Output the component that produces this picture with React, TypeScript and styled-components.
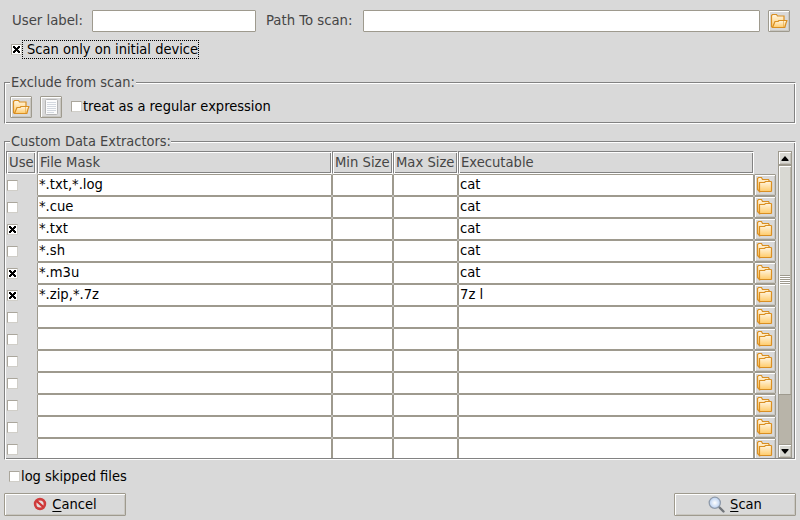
import React, { useState } from "react";
import styled, { createGlobalStyle, css } from "styled-components";

const Global = createGlobalStyle`
  * { box-sizing: border-box; }
  body { margin: 0; background: #d9d9d9; overflow: hidden; }
`;

const face = "#d9d9d9";
const edge = "#9e9a8e";
const groove = css`
  border: 1px solid;
  border-color: #828282 #fff #fff #828282;
  box-shadow: inset 1px 1px 0 #fff, inset -1px -1px 0 #828282;
`;

const Window = styled.main`
  width: 800px;
  height: 520px;
  display: flex;
  flex-direction: column;
  padding: 10px 4px 4px;
  background: ${face};
  color: #000;
  font: 14.53px/20px "DejaVu Sans Condensed", "DejaVu Sans", sans-serif;
  font-stretch: condensed;
  white-space: nowrap;
`;

const TopRow = styled.div`
  display: flex;
  height: 22px;
  padding: 0 6px 0 8px;
  color: #454545;
  font-size: 14.75px;
`;

const FieldLabel = styled.label<{ $width: number; $indent?: number }>`
  width: ${(p) => p.$width}px;
  padding-left: ${(p) => p.$indent ?? 0}px;
  flex: none;
`;

const TextField = styled.input<{ $width?: number }>`
  width: ${(p) => (p.$width ? `${p.$width}px` : "auto")};
  flex: ${(p) => (p.$width ? "none" : "1")};
  min-width: 0;
  height: 22px;
  border: 1px solid ${edge};
  border-radius: 1px;
  background: #fff;
  padding: 0 2px;
  margin: 0;
  font: inherit;
  outline: none;
`;

const IconButton = styled.button<{ $gap?: number }>`
  width: 22px;
  height: 22px;
  flex: none;
  margin: 0 0 0 ${(p) => p.$gap ?? 0}px;
  padding: 0;
  display: grid;
  place-items: center;
  background: ${face};
  border: 1px solid ${edge};
  border-radius: 1px;
  box-shadow: inset 1px 1px 0 #fff, inset -1px -1px 0 #c9c7c1;
`;

const CheckLine = styled.label<{ $top: number; $left: number }>`
  display: flex;
  align-items: center;
  height: 20px;
  margin: ${(p) => p.$top}px 0 0 ${(p) => p.$left}px;
`;

const CheckText = styled.span`
  padding-left: 1px;
`;

const Box = styled.span`
  display: block;
  width: 11px;
  height: 11px;
  flex: none;
  background: #fff;
  border: 1px solid;
  border-color: #aaa69c #d0cec8 #d0cec8 #aaa69c;
  svg { display: block; }
`;

const Focused = styled.span`
  width: 177px;
  height: 19px;
  line-height: 17px;
  padding-left: 4px;
  border: 1px dotted #000;
`;

const Group = styled.section<{ $top: number; $height: number }>`
  ${groove}
  height: ${(p) => p.$height}px;
  margin-top: ${(p) => p.$top}px;
  padding: 0 1px 1px;
  flex: none;
`;

const Legend = styled.h2<{ $width: number }>`
  width: ${(p) => p.$width}px;
  height: 16px;
  margin: -9px 0 0 4px;
  padding-left: 1px;
  line-height: 16px;
  font-size: 14.45px;
  font-weight: normal;
  color: #454545;
  background: ${face};
`;

const ExcludeTools = styled.div`
  display: flex;
  padding: 6px 0 0 4px;
  gap: 8px;
`;

const Extractors = styled.div`
  display: flex;
  margin-top: 2px;
  height: 307px;
`;

const Table = styled.div`
  width: 770px;
  height: 307px;
  overflow: hidden;
  flex: none;
  font-size: 14.65px;
`;

const columns = css`
  display: grid;
  grid-template-columns: 31px 295px 61px 65px 296px 22px;
`;

const Header = styled.div`
  ${columns}
  height: 23px;
  color: #454545;
`;

const HeadCell = styled.div<{ $narrow?: boolean }>`
  ${groove}
  padding-left: 2px;
  margin-right: ${(p) => (p.$narrow ? 1 : 0)}px;
  line-height: 20px;
`;

const Row = styled.div`
  ${columns}
  height: 22px;
`;

const CellInput = styled(TextField)`
  width: 100%;
  padding: 0 1px 3px;
`;

const UseCell = styled.label`
  display: block;
  padding: 6px 0 0 1px;
`;

const Scrollbar = styled.div`
  width: 14px;
  margin-left: 2px;
  height: 307px;
  display: flex;
  flex-direction: column;
  background: #b8b4a9;
  border-left: 1px solid ${edge};
  border-right: 1px solid ${edge};
`;

const Arrow = styled.button`
  height: 14px;
  width: 12px;
  padding: 0;
  display: grid;
  place-items: center;
  border: 0;
  border-top: 1px solid ${edge};
  border-bottom: 1px solid ${edge};
  background: #d9d9d3;
  box-shadow: inset 1px 1px 0 #fff, inset -1px -1px 0 #c4c1b9;
`;

const Thumb = styled.div`
  height: 230px;
  flex: none;
  display: grid;
  place-items: center;
  border-bottom: 1px solid ${edge};
  border-top: 1px solid ${edge};
  background: #d9d9d3;
  box-shadow: inset 1px 1px 0 #fff, inset -1px 0 0 #b9b5ab;
`;

const Grip = styled.div`
  width: 10px;
  height: 10px;
  background: repeating-linear-gradient(${edge} 0 1px, #fff 1px 2px);
`;

const Spacer = styled.div`
  flex: 1;
`;

const Footer = styled.footer`
  display: flex;
  justify-content: space-between;
  margin-top: 7px;
`;

const ActionButton = styled.button`
  width: 122px;
  height: 23px;
  display: flex;
  align-items: center;
  justify-content: center;
  gap: 5px;
  padding: 0 0 1px;
  border: 1px solid ${edge};
  border-radius: 1px;
  background: ${face};
  box-shadow: inset 1px 1px 0 #fff, inset -1px -1px 0 #c9c7c1;
  color: #000;
  font: inherit;
`;

const ActionText = styled.span`
  height: 20px;
  line-height: 20px;
`;

const Mnemonic = styled.span`
  text-decoration: underline;
  text-decoration-thickness: 1px;
  text-underline-offset: 2px;
`;

const Gradients = () => (
  <svg width="0" height="0" display="block">
    <defs>
      <linearGradient id="paper" x1="0" y1="0" x2="0" y2="1">
        <stop offset="0" stopColor="#fff6e2" />
        <stop offset="1" stopColor="#ffca68" />
      </linearGradient>
      <radialGradient id="lens">
        <stop offset="0" stopColor="#fff" />
        <stop offset="1" stopColor="#b8cff0" />
      </radialGradient>
    </defs>
  </svg>
);

const OpenFolder = () => (
  <svg width="18" height="18" viewBox="0 0 18 18">
    <path d="M2.500 15.500l-1-1v-11l1-1h4l1 1.500h6.500v5.500" fill="url(#paper)" stroke="#d98f22" strokeWidth="1.200" />
    <path d="M2.500 15.500l2.500-6h3l1-1h8l-1 2.500-1.200 4.500z" fill="url(#paper)" stroke="#d98f22" strokeWidth="1.200" strokeLinejoin="round" />
    <path d="M13.500 9v6" stroke="#e4a545" opacity=".6" />
  </svg>
);

const ClosedFolder = () => (
  <svg width="18" height="18" viewBox="0 0 18 18">
    <path d="M2.500 14.500l-1-1v-11l1-1h3l1 2h6l1 2v8z" fill="url(#paper)" stroke="#d98f22" strokeWidth="1.200" />
    <path d="M2.500 14.500l1 1V6.500h5l1-1h5.500l.500.500v9l-.500.500H3.500z" fill="url(#paper)" stroke="#d98f22" strokeWidth="1.200" />
  </svg>
);

const PageIcon = () => (
  <svg width="16" height="18" viewBox="0 0 16 18">
    <rect x="2.500" y="1.500" width="12" height="15" rx="1" fill="#fcfcfc" stroke="#b5b5b5" />
    <path d="M4 4.500h9M4 6.500h9M4 8.500h9M4 10.500h9M4 12.500h9M4 14.500h7" stroke="#d3d8df" />
  </svg>
);

const StopIcon = () => (
  <svg width="14" height="14" viewBox="0 0 14 14">
    <circle cx="7" cy="7" r="4.900" fill="#e6dcdc" stroke="#cf3c3c" strokeWidth="2.600" />
    <path d="M3.800 4.200l6.400 5.600" stroke="#cf3434" strokeWidth="2.200" />
  </svg>
);

const LensIcon = () => (
  <svg width="17" height="17" viewBox="0 0 17 17">
    <path d="M11 11l4.500 4.500" stroke="#71757a" strokeWidth="2.400" strokeLinecap="round" />
    <circle cx="6.800" cy="6.800" r="5.600" fill="url(#lens)" stroke="#8f9bab" strokeWidth="1.300" />
  </svg>
);

const CheckBox = ({ on: initial = false }: { on?: boolean }) => {
  const [on, setOn] = useState(initial);
  return (
    <Box role="checkbox" aria-checked={on} onClick={() => setOn(!on)}>
      {on && (
        <svg width="9" height="9" viewBox="0 0 9 9" shapeRendering="crispEdges">
          <path d="M1 1h2v1h1v1h1V2h1V1h2v2H7v1H6v1h1v1h1v2H6V7H5V6H4v1H3v1H1V6h1V5h1V4H2V3H1z" />
        </svg>
      )}
    </Box>
  );
};

const rows: { mask: string; exec: string; on?: boolean }[] = [
  { mask: "*.txt,*.log", exec: "cat" },
  { mask: "*.cue", exec: "cat" },
  { mask: "*.txt", exec: "cat", on: true },
  { mask: "*.sh", exec: "cat" },
  { mask: "*.m3u", exec: "cat", on: true },
  { mask: "*.zip,*.7z", exec: "7z l", on: true },
  ...Array.from({ length: 7 }, () => ({ mask: "", exec: "" })),
];

export default function App() {
  return (
    <Window>
      <Global />
      <TopRow>
        <FieldLabel $width={80}>User label:</FieldLabel>
        <TextField $width={164} />
        <FieldLabel $width={107} $indent={10}>Path To scan:</FieldLabel>
        <TextField />
        <IconButton $gap={8}><OpenFolder /></IconButton>
      </TopRow>
      <CheckLine $top={7} $left={7}>
        <CheckBox on />
        <Focused>Scan only on initial device</Focused>
      </CheckLine>
      <Group $top={23} $height={42}>
        <Legend $width={126}>Exclude from scan:</Legend>
        <ExcludeTools>
          <IconButton><OpenFolder /></IconButton>
          <IconButton><PageIcon /></IconButton>
          <CheckLine $top={0} $left={1}>
            <CheckBox />
            <CheckText>treat as a regular expression</CheckText>
          </CheckLine>
        </ExcludeTools>
      </Group>
      <Group $top={17} $height={319}>
        <Legend $width={161}>Custom Data Extractors:</Legend>
        <Extractors>
          <Table>
            <Header>
              <HeadCell $narrow>Use</HeadCell>
              <HeadCell>File Mask</HeadCell>
              <HeadCell>Min Size</HeadCell>
              <HeadCell>Max Size</HeadCell>
              <HeadCell>Executable</HeadCell>
            </Header>
            {rows.map((row, i) => (
              <Row key={i}>
                <UseCell><CheckBox on={row.on} /></UseCell>
                <CellInput defaultValue={row.mask} />
                <CellInput />
                <CellInput />
                <CellInput defaultValue={row.exec} />
                <IconButton><ClosedFolder /></IconButton>
              </Row>
            ))}
          </Table>
          <Scrollbar>
            <Arrow>
              <svg width="8" height="5" viewBox="0 0 8 5"><path d="M4 0l3.500 4v1h-7V4z" /></svg>
            </Arrow>
            <Thumb><Grip /></Thumb>
            <Spacer />
            <Arrow>
              <svg width="8" height="5" viewBox="0 0 8 5"><path d="M4 5L.5 1V0h7v1z" /></svg>
            </Arrow>
          </Scrollbar>
        </Extractors>
      </Group>
      <CheckLine $top={6} $left={5}>
        <CheckBox />
        <CheckText>log skipped files</CheckText>
      </CheckLine>
      <Footer>
        <ActionButton><StopIcon /><ActionText><Mnemonic>C</Mnemonic>ancel</ActionText></ActionButton>
        <ActionButton><LensIcon /><ActionText><Mnemonic>S</Mnemonic>can</ActionText></ActionButton>
      </Footer>
      <Gradients />
    </Window>
  );
}
